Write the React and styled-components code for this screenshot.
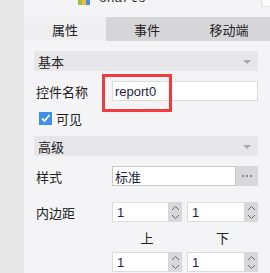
import React from 'react';
import styled, { createGlobalStyle } from 'styled-components';

const GlobalStyle = createGlobalStyle`
  body {
    margin: 0;
    background: #e8e8e8;
    font-family: "Noto Sans CJK SC", "Liberation Sans", sans-serif;
    font-size: 13px;
    color: #222;
  }
`;

const Page = styled.div`
  display: flex;
  height: 273px;
  overflow: hidden;
`;

const LeftStrip = styled.div`
  width: 24px;
  flex-shrink: 0;
  background: #e8e8e8;
`;

const Panel = styled.div`
  flex: 1;
  min-width: 0;
  background: #f4f4f6;
  display: flex;
  flex-direction: column;
`;

// 頂部被截掉的標題
const TopBar = styled.div`
  height: 17px;
  overflow: hidden;
  display: flex;
  align-items: flex-start;
  padding-left: 54px;
  gap: 9px;
`;

const FileIcon = styled.div`
  width: 12px;
  height: 5px;
  background: linear-gradient(90deg, #9cc24a 0 30%, #f5b93a 30% 70%, #4a8fe0 70%);
`;

const TopTitle = styled.span`
  font-family: "Liberation Mono", monospace;
  font-size: 13px;
  line-height: 13px;
  margin-top: -8px;
  color: #333;
`;

const Corner = styled.div`
  margin-left: auto;
  width: 8px;
  height: 6px;
  background: #fbfbfb;
  border: 1px solid #e4e4e4;
  border-top: none;
  border-right: none;
`;

const Tabs = styled.div`
  display: grid;
  grid-template-columns: repeat(3, 1fr);
  height: 24px;
`;

const Tab = styled.div`
  display: flex;
  align-items: center;
  justify-content: center;
  background: ${({ $active }) => ($active ? '#efeff1' : '#d6d6d8')};
  font-size: 13px;
`;

const Content = styled.div`
  padding: 10px 12px 0 10px;
  display: flex;
  flex-direction: column;
`;

const SectionHeader = styled.div`
  height: 20px;
  background: #e7e7e9;
  display: flex;
  align-items: center;
  justify-content: space-between;
  padding: 0 7px 0 4px;
  font-size: 13px;
`;

const Caret = styled.span`
  width: 0;
  height: 0;
  border-left: 4px solid transparent;
  border-right: 4px solid transparent;
  border-top: 4px solid #a8a8aa;
  margin-top: 2px;
`;

const Row = styled.div`
  display: flex;
  align-items: center;
  margin-top: ${({ $top }) => $top}px;
`;

const Label = styled.div`
  width: 76px;
  padding-left: 2px;
  flex-shrink: 0;
`;

const InputWrap = styled.div`
  position: relative;
  flex: 1;
  display: flex;
`;

const TextInput = styled.div`
  flex: 1;
  height: 18px;
  background: #fff;
  border: 1px solid ${({ $latin }) => ($latin ? '#dcdcdc' : '#c8c8c8')};
  display: flex;
  align-items: center;
  padding-left: 2px;
  font-family: ${({ $latin }) => ($latin ? '"Liberation Sans", sans-serif' : 'inherit')};
  font-size: 13px;
  color: #1e1e3c;
`;

const Highlight = styled.div`
  position: absolute;
  left: -10px;
  top: -7px;
  width: 64px;
  height: 32px;
  border: 3px solid #f03c3c;
`;

const DotsButton = styled.div`
  width: 22px;
  height: 20px;
  background: #d8d8da;
  display: flex;
  align-items: center;
  justify-content: center;
  gap: 2px;
`;

const Dot = styled.span`
  width: 2px;
  height: 2px;
  background: #8a8a8a;
`;

const CheckRow = styled.div`
  display: flex;
  align-items: center;
  height: 13px;
  margin: 11px 0 11px 5px;
  gap: 4px;
`;

const CheckBox = styled.div`
  width: 13px;
  height: 13px;
  background: #3d8fe8;
  display: flex;
  align-items: center;
  justify-content: center;
`;

const PaddingGrid = styled.div`
  display: grid;
  grid-template-columns: 73px 70px 71px;
  column-gap: 5px;
  margin-top: 16px;
`;

const GridLabel = styled.div`
  padding-left: 2px;
  height: 20px;
  display: flex;
  align-items: center;
`;

const Spinner = styled.div`
  display: flex;
  height: 20px;
`;

const SpinField = styled.div`
  flex: 1;
  background: #fff;
  border: 1px solid #dcdcdc;
  border-right: none;
  display: flex;
  align-items: center;
  padding-left: 4px;
  font-family: "Liberation Sans", sans-serif;
  font-size: 13px;
  color: #1e1e50;
`;

const SpinButtons = styled.div`
  width: 14px;
  background: #d8d8da;
  display: flex;
  flex-direction: column;
  align-items: center;
  justify-content: space-around;
  padding: 1px 0;
`;

const Caption = styled.div`
  height: 30px;
  display: flex;
  align-items: center;
  justify-content: center;
  font-size: 13px;
`;

const Chevron = ({ up }) => (
  <svg width="9" height="6" viewBox="0 0 9 6">
    <path
      d={up ? 'M1 5 L4.5 1.5 L8 5' : 'M1 1 L4.5 4.5 L8 1'}
      fill="none"
      stroke="#6a6a6a"
      strokeWidth="1"
    />
  </svg>
);

const NumberSpinner = ({ value }) => (
  <Spinner>
    <SpinField>{value}</SpinField>
    <SpinButtons>
      <Chevron up />
      <Chevron />
    </SpinButtons>
  </Spinner>
);

const App = () => (
  <>
    <GlobalStyle />
    <Page>
      <LeftStrip />
      <Panel>
        <TopBar>
          <FileIcon />
          <TopTitle>charts</TopTitle>
          <Corner />
        </TopBar>
        <Tabs>
          <Tab $active>属性</Tab>
          <Tab>事件</Tab>
          <Tab>移动端</Tab>
        </Tabs>
        <Content>
          <SectionHeader>
            基本
            <Caret />
          </SectionHeader>
          <Row $top={10}>
            <Label>控件名称</Label>
            <InputWrap>
              <TextInput $latin>report0</TextInput>
              <Highlight />
            </InputWrap>
          </Row>
          <CheckRow>
            <CheckBox>
              <svg width="11" height="11" viewBox="0 0 11 11">
                <path d="M2 5.5 L4.5 8 L9.5 2" fill="none" stroke="#fff" strokeWidth="1.8" />
              </svg>
            </CheckBox>
            可见
          </CheckRow>
          <SectionHeader>
            高级
            <Caret />
          </SectionHeader>
          <Row $top={10}>
            <Label>样式</Label>
            <InputWrap>
              <TextInput>标准</TextInput>
              <DotsButton>
                <Dot />
                <Dot />
                <Dot />
              </DotsButton>
            </InputWrap>
          </Row>
          <PaddingGrid>
            <GridLabel>内边距</GridLabel>
            <NumberSpinner value="1" />
            <NumberSpinner value="1" />
            <div />
            <Caption>上</Caption>
            <Caption>下</Caption>
            <div />
            <NumberSpinner value="1" />
            <NumberSpinner value="1" />
          </PaddingGrid>
        </Content>
      </Panel>
    </Page>
  </>
);

export default App;
